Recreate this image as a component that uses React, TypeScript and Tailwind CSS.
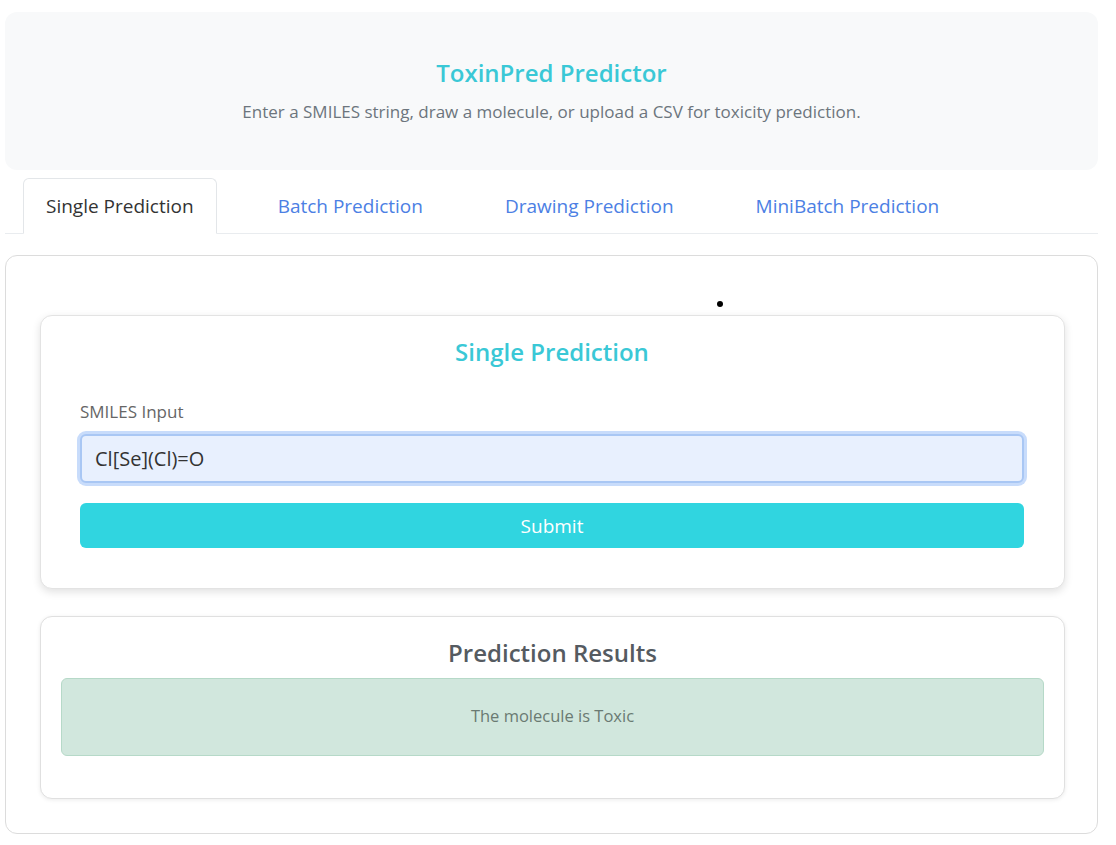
import { useState } from 'react'

const font = { fontFamily: '"Open Sans", "Noto Sans", sans-serif' }

const tabs = ['Single Prediction', 'Batch Prediction', 'Drawing Prediction', 'MiniBatch Prediction']

export default function App() {
  const [active, setActive] = useState(0)
  const [smiles, setSmiles] = useState('Cl[Se](Cl)=O')
  return (
    <div className="min-h-[845px] bg-white pl-[5px] pr-[18px] pt-3 pb-3 font-['Open_Sans',sans-serif]">
      <header className="h-[158px] rounded-xl bg-[#f8f9fa] flex flex-col items-center justify-center">
        <h1 className="text-[24px] font-semibold text-[#3ac8d6] leading-tight">ToxinPred Predictor</h1>
        <p className="mt-[11px] text-[17px] text-[#6c757d]">
          Enter a SMILES string, draw a molecule, or upload a CSV for toxicity prediction.
        </p>
      </header>

      <nav className="mt-2 flex border-b border-[#e9ecef] pl-[18px]">
        {tabs.map((t, i) => (
          <button
            key={t}
            onClick={() => setActive(i)}
            className={
              i === active
                ? 'h-[56px] px-[22px] mr-[20px] mb-[-1px] rounded-t-md border border-[#e3e6e9] border-b-white bg-white text-[19px] text-[#333]'
                : 'h-[56px] px-[40px] mb-[-1px] border border-transparent text-[19px] text-[#4c80e4]'
            }
          >
            {t}
          </button>
        ))}
      </nav>

      <main className="relative mt-[21px] rounded-xl border border-[#dcdcdc] pl-[34px] pr-[32px] pt-[59px] pb-[34px]">
        <span className="absolute left-[711px] top-[45px] h-[6px] w-[6px] rounded-full bg-black" />

        <section className="rounded-xl border border-[#e3e3e3] bg-white pl-[39px] pr-[40px] pt-[18px] pb-[40px] shadow-[0_3px_8px_rgba(0,0,0,0.12)]">
          <h2 className="text-center text-[24px] font-semibold text-[#3ac8d6]">Single Prediction</h2>
          <label className="mt-[29px] block text-[17px] text-[#666]">SMILES Input</label>
          <input
            value={smiles}
            onChange={e => setSmiles(e.target.value)}
            className="mt-[9px] block h-[49px] w-full rounded-md border-2 border-[#a9c7f4] bg-[#e8f0fe] px-[13px] text-[20px] text-[#333] outline-none ring-[3px] ring-[#c8dcfb]"
            style={font}
          />
          <button className="mt-[20px] h-[45px] w-full rounded-md bg-[#30d5e0] pt-[3px] text-[19px] font-medium text-white">
            Submit
          </button>
        </section>

        <section className="mt-[27px] rounded-xl border border-[#e0e0e0] bg-white px-[20px] pt-[18px] pb-[42px] shadow-[0_1px_4px_rgba(0,0,0,0.08)]">
          <h2 className="text-center text-[24px] font-semibold text-[#555b61]">Prediction Results</h2>
          <div className="mt-[7px] flex h-[78px] items-center justify-center rounded-md border border-[#b6d9c8] bg-[#d1e7dd] text-[16.5px] text-[#6a7a72]">
            The molecule is Toxic
          </div>
        </section>
      </main>
    </div>
  )
}
